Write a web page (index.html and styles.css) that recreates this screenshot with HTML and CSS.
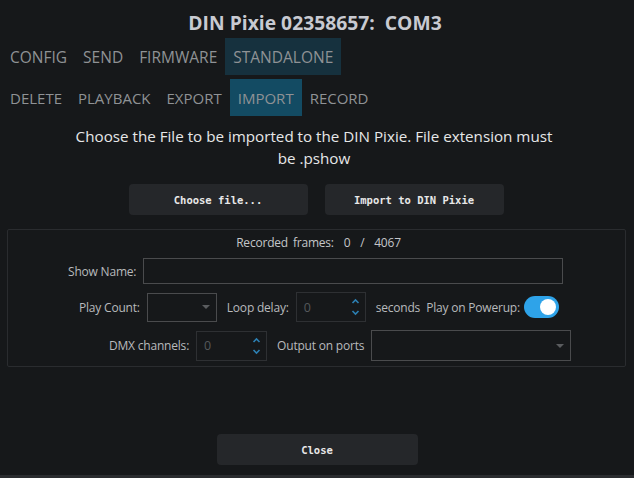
FILE: index.html
```html
<!DOCTYPE html>
<html>
<head>
<meta charset="utf-8">
<link rel="stylesheet" href="styles.css">
</head>
<body>
<div class="app">
  <h1 class="title">DIN Pixie 02358657:&nbsp; COM3</h1>
  <nav class="tabs">
    <span class="tab">CONFIG</span>
    <span class="tab">SEND</span>
    <span class="tab">FIRMWARE</span>
    <span class="tab tab-active1">STANDALONE</span>
  </nav>
  <nav class="tabs tabs2">
    <span class="tab">DELETE</span>
    <span class="tab">PLAYBACK</span>
    <span class="tab">EXPORT</span>
    <span class="tab tab-active2">IMPORT</span>
    <span class="tab">RECORD</span>
  </nav>
  <p class="desc">Choose the File to be imported to the DIN Pixie. File extension must<br>be .pshow</p>
  <div class="actions">
    <button class="btn">Choose file...</button>
    <button class="btn">Import to DIN Pixie</button>
  </div>
  <section class="group">
    <div class="frames">Recorded frames:&nbsp; 0&nbsp; /&nbsp; 4067</div>
    <div class="row row1">
      <span class="lbl">Show Name:</span>
      <span class="input name"></span>
    </div>
    <div class="row row2">
      <span class="lbl">Play Count:</span>
      <span class="input combo small"><span class="caret"></span></span>
      <span class="lbl gapl">Loop delay:</span>
      <span class="input spin"><span class="val">0</span>
        <svg class="arrows" width="9" height="20" viewBox="0 0 9 20"><path d="M1.5 6 L4.5 3 L7.5 6" fill="none" stroke="#2c7fb2" stroke-width="1.6"/><path d="M1.5 14 L4.5 17 L7.5 14" fill="none" stroke="#2c7fb2" stroke-width="1.6"/></svg>
      </span>
      <span class="lbl sec">seconds</span>
      <span class="lbl pop">Play on Powerup:</span>
      <span class="toggle"><span class="knob"></span></span>
    </div>
    <div class="row row3">
      <span class="lbl">DMX channels:</span>
      <span class="input spin dmx"><span class="val">0</span>
        <svg class="arrows" width="9" height="20" viewBox="0 0 9 20"><path d="M1.5 6 L4.5 3 L7.5 6" fill="none" stroke="#2c7fb2" stroke-width="1.6"/><path d="M1.5 14 L4.5 17 L7.5 14" fill="none" stroke="#2c7fb2" stroke-width="1.6"/></svg>
      </span>
      <span class="lbl gapl">Output on ports</span>
      <span class="input combo ports"><span class="caret"></span></span>
    </div>
  </section>
  <div class="footer">
    <button class="btn close">Close</button>
  </div>
</div>
<div class="bottom-edge"></div>
</body>
</html>
```
FILE: styles.css
```css
html, body {
  margin: 0;
  padding: 0;
  background: #16181a;
}
body {
  width: 634px;
  height: 478px;
  overflow: hidden;
  display: flex;
  flex-direction: column;
  font-family: "Open Sans", "Noto Sans", sans-serif;
}
.app {
  flex: 1;
  display: flex;
  flex-direction: column;
}
.title {
  margin: 0;
  padding-top: 7px;
  height: 31px;
  line-height: 31px;
  text-align: center;
  font-size: 19.3px;
  font-weight: 700;
  color: #c8cad1;
  padding-right: 4px;
}
.tabs {
  display: flex;
  padding-left: 2px;
  height: 37px;
}
.tabs2 {
  margin-top: 4px;
}
.tab {
  display: flex;
  align-items: center;
  padding: 0 8px;
  font-size: 15.5px;
  color: #8f9295;
}
.tabs2 .tab {
  font-size: 15px;
}
.tab-active1 {
  background: #16313e;
}
.tab-active2 {
  background: #134b63;
}
.desc {
  margin: 9px 0 0;
  padding-right: 6px;
  text-align: center;
  font-size: 15.2px;
  line-height: 22px;
  color: #e6e7e8;
}
.actions {
  display: flex;
  justify-content: center;
  gap: 17px;
  margin-top: 15px;
  padding-right: 2px;
}
.btn {
  width: 179px;
  height: 31px;
  border: none;
  border-radius: 4px;
  background: #25272a;
  color: #e8e8e8;
  font-family: "DejaVu Sans Mono", "Liberation Mono", monospace;
  font-size: 10.5px;
  font-weight: 700;
  padding: 0;
}
.group {
  margin: 14px 8px 0 7px;
  height: 136px;
  border: 1px solid #2a2c2f;
  border-radius: 2px;
  display: flex;
  flex-direction: column;
  font-size: 12px;
  color: #b8babd;
  letter-spacing: -0.2px;
}
.frames {
  text-align: center;
  margin-top: 4px;
  height: 18px;
  line-height: 18px;
  color: #c4c6c9;
  padding-left: 4px;
  word-spacing: 2px;
}
.row {
  display: flex;
  align-items: center;
}
.row1 {
  margin-top: 6px;
  padding-left: 60px;
  height: 26px;
}
.row2 {
  margin-top: 8px;
  padding-left: 71px;
  height: 30px;
}
.row3 {
  margin-top: 8px;
  padding-left: 101px;
  height: 31px;
}
.lbl {
  white-space: nowrap;
  margin-right: 7px;
}
.gapl {
  margin-left: 10px;
}
.sec {
  margin-left: 3px;
  margin-right: 6px;
}
.pop {
  margin-right: 4px;
}
.input {
  box-sizing: border-box;
  border: 1px solid #4a4b4d;
  background: #16181a;
  position: relative;
}
.name {
  width: 420px;
  height: 26px;
}
.combo.small {
  width: 70px;
  height: 29px;
}
.ports {
  width: 200px;
  height: 31px;
}
.caret {
  position: absolute;
  right: 6px;
  top: 50%;
  margin-top: -2px;
  width: 0;
  height: 0;
  border-left: 4px solid transparent;
  border-right: 4px solid transparent;
  border-top: 4px solid #5a5c5f;
}
.spin {
  width: 70px;
  height: 30px;
  border-color: #2e3033;
  display: flex;
  align-items: center;
  margin-right: 7px;
}
.spin.dmx {
  width: 71px;
  margin-right: 0;
}
.val {
  margin-left: 7px;
  color: #55585b;
  font-size: 12.5px;
}
.arrows {
  position: absolute;
  right: 5px;
  top: 4px;
}
.toggle {
  width: 35px;
  height: 22px;
  border-radius: 11px;
  background: #2ea3e9;
  display: flex;
  align-items: center;
  justify-content: flex-end;
  padding-right: 3px;
  box-sizing: border-box;
}
.knob {
  width: 16px;
  height: 16px;
  border-radius: 50%;
  background: #ffffff;
}
.footer {
  display: flex;
  justify-content: center;
  margin-top: 67px;
}
.btn.close {
  width: 201px;
}
.bottom-edge {
  height: 3px;
  background: #2a2c2f;
}
```
